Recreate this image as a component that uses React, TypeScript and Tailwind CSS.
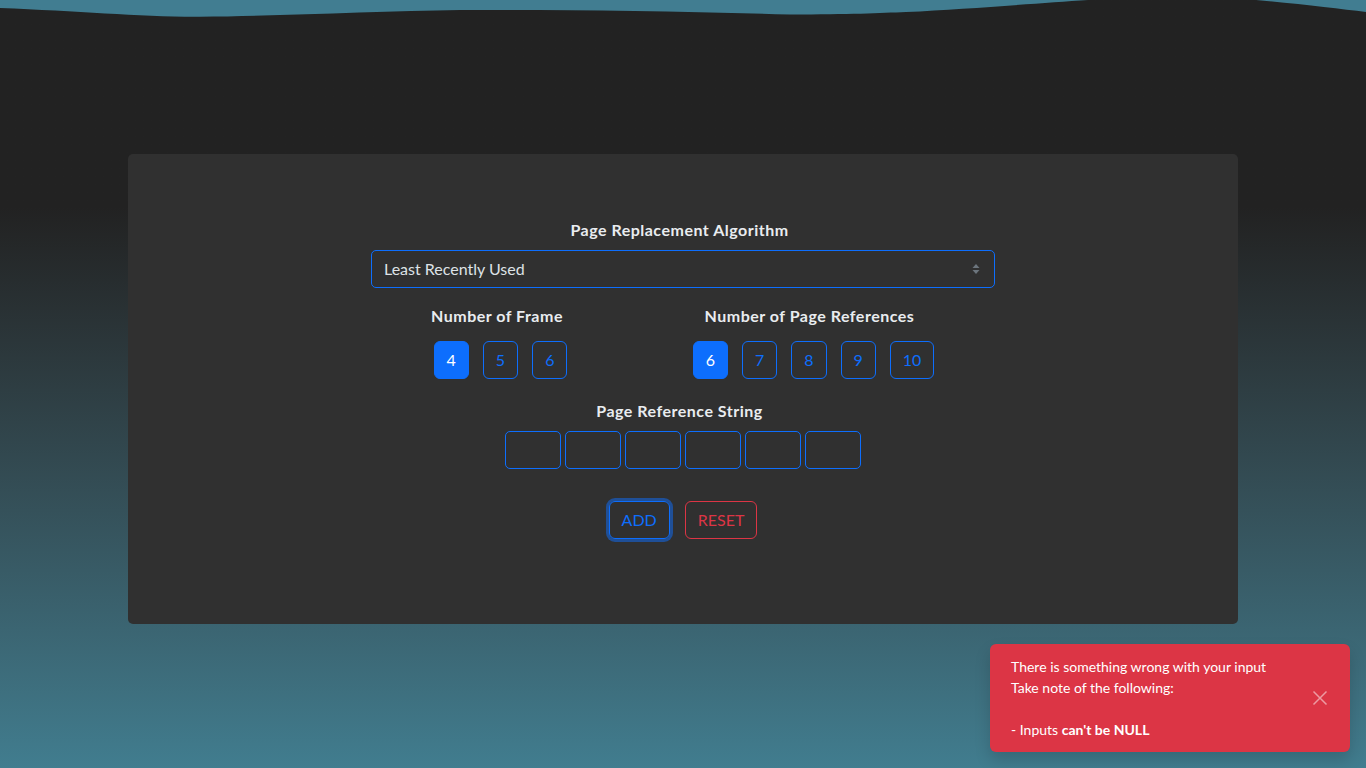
import React from "react";

const frames = [4, 5, 6];
const references = [6, 7, 8, 9, 10];

function NumberButton({ value, active }: { value: number; active: boolean }) {
  return (
    <button
      className={
        active
          ? "h-[38px] px-3 rounded-[6px] border border-[#0d6efd] bg-[#0d6efd] text-white text-base leading-6"
          : "h-[38px] px-3 rounded-[6px] border border-[#0d6efd] bg-transparent text-[#0d6efd] text-base leading-6"
      }
    >
      {value}
    </button>
  );
}

function App() {
  return (
    <div
      className="relative h-[768px] w-[1366px] overflow-hidden bg-linear-to-b from-[#222222] from-[27%] to-[#417d8f] text-[#dee2e6]"
      style={{ fontFamily: "Lato, 'Open Sans', sans-serif" }}
    >
      {/* wave on top */}
      <svg
        className="absolute left-0 top-0"
        width="1366"
        height="20"
        viewBox="0 0 1366 20"
        preserveAspectRatio="none"
      >
        <path
          d="M0 0 L0 8 C80 11 140 17 200 16.7 C280 16 380 11 460 10 C560 9.5 680 11 790 14.5 C850 14.5 880 13 906 12 C970 9 1040 3 1088 0 L1256 0 C1300 4 1340 9 1366 12 L1366 0 Z"
          fill="#417d91"
        />
      </svg>

      <div className="flex justify-center pt-[154px]">
        <div className="w-[1110px] h-[470px] rounded-[5px] bg-[#303030] pt-[64px] flex flex-col items-center">
          <h6 className="mr-[7px] text-base leading-6 font-bold tracking-[0.5px] text-[#e9ecef]">
            Page Replacement Algorithm
          </h6>
          <div className="mt-2 w-[624px] h-[38px] rounded-[5px] border border-[#0d6efd] flex items-center justify-between pl-3 pr-[14px]">
            <span className="text-base text-[#dee2e6]">Least Recently Used</span>
            <svg width="8" height="12" viewBox="0 0 8 12">
              <path d="M4 1 L7.5 5 L0.5 5 Z" fill="#6c757d" />
              <path d="M4 11 L7.5 7 L0.5 7 Z" fill="#6c757d" />
            </svg>
          </div>

          <div className="mt-4 flex gap-[121px]">
            <div className="w-[140px] flex flex-col items-center">
              <h6 className="mr-[7px] text-base leading-6 font-bold tracking-[0.5px] text-[#e9ecef]">
                Number of Frame
              </h6>
              <div className="mt-[13px] flex gap-[14px]">
                {frames.map((f) => (
                  <NumberButton key={f} value={f} active={f === 4} />
                ))}
              </div>
            </div>
            <div className="w-[244px] flex flex-col items-center">
              <h6 className="mr-[8px] text-base leading-6 font-bold tracking-[0.5px] text-[#e9ecef]">
                Number of Page References
              </h6>
              <div className="mt-[13px] flex gap-[14px]">
                {references.map((r) => (
                  <NumberButton key={r} value={r} active={r === 6} />
                ))}
              </div>
            </div>
          </div>

          <h6 className="mt-5 mr-[7px] text-base leading-6 font-bold tracking-[0.5px] text-[#e9ecef]">
            Page Reference String
          </h6>
          <div className="mt-2 flex gap-1">
            {[0, 1, 2, 3, 4, 5].map((i) => (
              <input
                key={i}
                className="w-[56px] h-[38px] rounded-[5px] border border-[#0d6efd] bg-transparent outline-none"
              />
            ))}
          </div>

          <div className="mt-8 flex gap-[15px]">
            <button className="h-[38px] px-3 rounded-[6px] border border-[#0d6efd] text-[#0d6efd] text-base leading-6 ring-[3px] ring-[#0d6efd]/50">
              ADD
            </button>
            <button className="h-[38px] px-3 rounded-[6px] border border-[#dc3545] text-[#dc3545] text-base leading-6">
              RESET
            </button>
          </div>
        </div>
      </div>

      {/* toast */}
      <div className="absolute left-[990px] top-[644px] w-[360px] h-[108px] rounded-[6px] bg-[#dc3545] shadow-[0_8px_16px_rgba(0,0,0,0.15)] flex items-center justify-between pl-[21px] pr-[22px]">
        <div className="text-sm leading-[21px] text-white">
          <div>There is something wrong with your input</div>
          <div>Take note of the following:</div>
          <div>&nbsp;</div>
          <div>
            - Inputs <b>can't be NULL</b>
          </div>
        </div>
        <svg width="16" height="16" viewBox="0 0 16 16" className="opacity-50">
          <path d="M1.5 1.5 L14.5 14.5 M14.5 1.5 L1.5 14.5" stroke="#ffffff" strokeWidth="1.5" />
        </svg>
      </div>
    </div>
  );
}

export default App;
